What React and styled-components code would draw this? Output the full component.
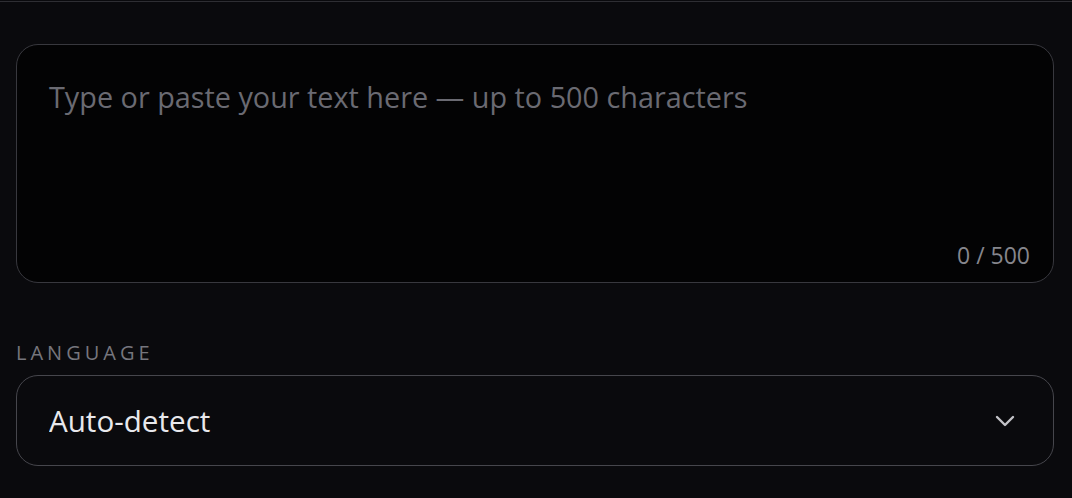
import React, { useState } from "react";
import styled, { createGlobalStyle } from "styled-components";

const Global = createGlobalStyle`
  html, body { margin: 0; padding: 0; background: #0a0a0d; }
  body { font-family: "Open Sans", "Noto Sans", sans-serif; }
  * { box-sizing: border-box; }
`;

const Panel = styled.div`
  margin-top: 1px;
  border-top: 1px solid #2e2e33;
  padding: 42px 18px 0 16px;
  display: flex;
  flex-direction: column;
`;

const Field = styled.div`
  position: relative;
  display: flex;
`;

const TextArea = styled.textarea`
  width: 100%;
  height: 239px;
  resize: none;
  background: #030304;
  border: 1.5px solid #38383e;
  border-radius: 22px;
  padding: 35px 32px;
  font-family: "Open Sans", "Noto Sans", sans-serif;
  font-size: 28.8px;
  line-height: 1.2;
  color: #e6e6ea;
  outline: none;
  &::placeholder { color: #6a6a72; }
`;

const Counter = styled.span`
  position: absolute;
  right: 24px;
  bottom: 12px;
  font-size: 23px;
  color: #86868d;
`;

const Label = styled.label`
  margin-top: 58px;
  font-size: 20px;
  letter-spacing: 4px;
  color: #76767d;
  line-height: 24px;
`;

const SelectWrap = styled.div`
  position: relative;
  margin-top: 10px;
  display: flex;
`;

const Select = styled.select`
  appearance: none;
  width: 100%;
  height: 91px;
  background: #0a0a0d;
  border: 1.5px solid #46464c;
  border-radius: 22px;
  padding: 0 32px;
  font-family: "Open Sans", "Noto Sans", sans-serif;
  font-size: 29.6px;
  color: #e8e8ec;
  outline: none;
`;

const Chevron = styled.svg`
  position: absolute;
  right: 39px;
  top: 50%;
  transform: translateY(-50%);
  pointer-events: none;
`;

export default function App() {
  const [text, setText] = useState("");
  return (
    <>
      <Global />
      <Panel>
        <Field>
          <TextArea
            value={text}
            maxLength={500}
            onChange={(e) => setText(e.target.value)}
            placeholder="Type or paste your text here — up to 500 characters"
          />
          <Counter>{text.length} / 500</Counter>
        </Field>
        <Label>LANGUAGE</Label>
        <SelectWrap>
          <Select defaultValue="auto">
            <option value="auto">Auto-detect</option>
            <option value="en">English</option>
          </Select>
          <Chevron width="20" height="12" viewBox="0 0 20 12" fill="none">
            <path d="M2 2 L10 10 L18 2" stroke="#c4c4c9" strokeWidth="2.4" strokeLinecap="round" strokeLinejoin="round" />
          </Chevron>
        </SelectWrap>
      </Panel>
    </>
  );
}
